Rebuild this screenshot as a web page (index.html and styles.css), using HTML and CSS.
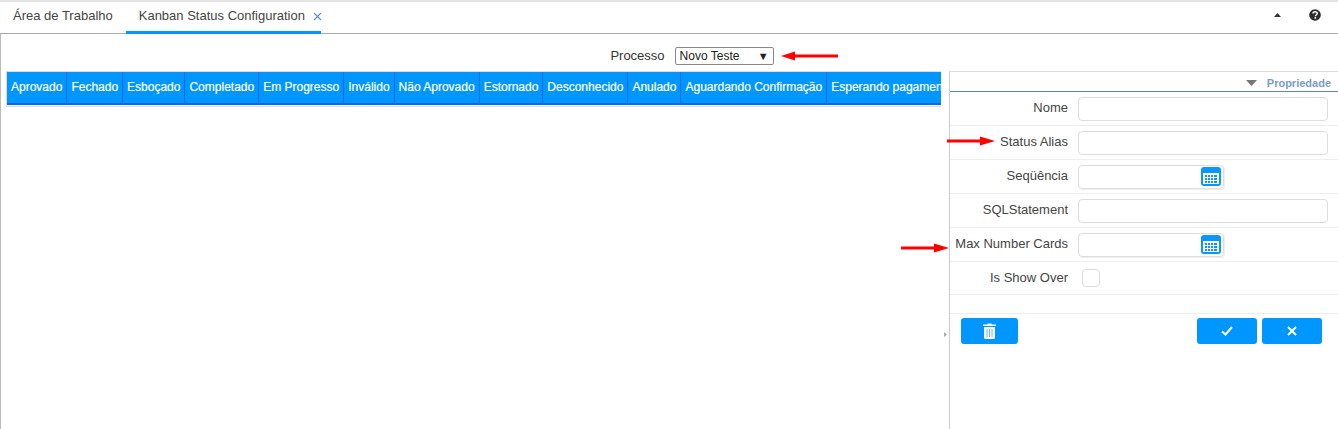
FILE: index.html
```html
<!DOCTYPE html>
<html lang="pt">
<head>
<meta charset="utf-8">
<title>Kanban Status Configuration</title>
<link rel="stylesheet" href="styles.css">
</head>
<body>
<header class="tabs">
  <div class="tab">Área de Trabalho</div>
  <div class="tab tab-active">Kanban Status Configuration<svg class="tab-close" width="9" height="9" viewBox="0 0 9 9"><path d="M1 1l7 7M8 1l-7 7" stroke="#5b8fd9" stroke-width="1.1" fill="none"/></svg>
  </div>
  <div class="tab-tools">
    <svg width="7" height="4" viewBox="0 0 7 4"><path d="M3.500 0L7 4H0z" fill="#333"/></svg>
    <svg class="help" width="12" height="12" viewBox="0 0 12 12"><circle cx="6" cy="6" r="5.800" fill="#2b2b2b"/><path d="M4 4.600c0-2.500 4.200-2.500 4.200-.1 0 1.500-1.800 1.400-1.800 2.700" stroke="#fff" stroke-width="1.500" fill="none"/><rect x="5.500" y="8" width="1.700" height="1.700" fill="#fff"/></svg>
  </div>
</header>
<main class="workspace">
  <div class="process-row">
    <label class="process-label">Processo</label>
    <div class="select"><span>Novo Teste</span><span class="select-caret">▼</span></div>
  </div>
  <div class="content">
    <section class="board">
      <div class="board-head">
        <div class="col">Aprovado</div>
        <div class="col">Fechado</div>
        <div class="col">Esboçado</div>
        <div class="col">Completado</div>
        <div class="col">Em Progresso</div>
        <div class="col">Inválido</div>
        <div class="col">Não Aprovado</div>
        <div class="col">Estornado</div>
        <div class="col">Desconhecido</div>
        <div class="col">Anulado</div>
        <div class="col">Aguardando Confirmação</div>
        <div class="col">Esperando pagamento</div>
      </div>
    </section>
    <div class="splitter"><svg width="3" height="5" viewBox="0 0 3 5"><path d="M0 0l3 2.500L0 5z" fill="#aaa"/></svg></div>
    <aside class="panel">
      <div class="panel-head">
        <svg width="11" height="6" viewBox="0 0 11 6"><path d="M0 0h11L5.500 6z" fill="#777"/></svg>
        <span>Propriedade</span>
      </div>
      <div class="field"><label>Nome</label><div class="input"></div></div>
      <div class="field"><label>Status Alias</label><div class="input"></div></div>
      <div class="field"><label>Seqüência</label><div class="input input-num"><svg class="calc" width="20" height="19" viewBox="0 0 20 19"><use href="#calc"/></svg></div></div>
      <div class="field"><label>SQLStatement</label><div class="input"></div></div>
      <div class="field"><label>Max Number Cards</label><div class="input input-num"><svg class="calc" width="20" height="19" viewBox="0 0 20 19"><use href="#calc"/></svg></div></div>
      <div class="field field-last"><label>Is Show Over</label><div class="check"></div></div>
      <div class="panel-gap"></div>
      <div class="actions">
        <button class="btn btn-del"><svg width="15" height="16" viewBox="0 0 15 16"><path d="M5.500 1.500V.5h4v1h4.500v1.500H1V1.500zM2 4h11v10.500a1.500 1.500 0 0 1-1.500 1.500h-8A1.500 1.500 0 0 1 2 14.500z" fill="#fff"/><path d="M5 6v8M7.500 6v8M10 6v8" stroke="#66bbff" stroke-width="1"/></svg></button>
        <div class="actions-right">
          <button class="btn btn-act"><svg width="12" height="10" viewBox="0 0 12 10"><path d="M1 5.500l3.500 3L11 1" stroke="#fff" stroke-width="2" fill="none"/></svg></button>
          <button class="btn btn-act"><svg width="10" height="10" viewBox="0 0 10 10"><path d="M1 1l8 8M9 1l-8 8" stroke="#fff" stroke-width="2" fill="none"/></svg></button>
        </div>
      </div>
    </aside>
  </div>
  <svg class="arrow arrow-process" width="57" height="10" viewBox="0 0 57 10"><path d="M0 5L14 .5V3.500H57V6.500H14V9.500z" fill="#f00"/></svg>
  <svg class="arrow arrow-alias" width="48" height="10" viewBox="0 0 48 10"><path d="M48 5L33 .5V3.500H0V6.500H33V9.500z" fill="#f00"/></svg>
  <svg class="arrow arrow-max" width="48" height="10" viewBox="0 0 48 10"><path d="M48 5L33 .5V3.500H0V6.500H33V9.500z" fill="#f00"/></svg>
</main>
<svg class="defs" width="0" height="0"><defs><g id="calc"><rect width="20" height="19" rx="3" fill="#0a96ff"/><rect x="2" y="6" width="16" height="11" fill="#fff"/><g fill="#0a96ff"><rect x="4" y="8" width="2" height="2"/><rect x="7" y="8" width="2" height="2"/><rect x="10" y="8" width="2" height="2"/><rect x="13" y="8" width="3" height="2"/><rect x="4" y="11" width="2" height="2"/><rect x="7" y="11" width="2" height="2"/><rect x="10" y="11" width="2" height="2"/><rect x="13" y="11" width="3" height="2"/><rect x="4" y="14" width="2" height="2"/><rect x="7" y="14" width="2" height="2"/><rect x="10" y="14" width="2" height="2"/><rect x="13" y="14" width="3" height="2"/></g></g></defs></svg>
</body>
</html>
```
FILE: styles.css
```css
* { box-sizing: border-box; }
html, body { margin: 0; height: 100%; overflow: hidden; }
body { font-family: "Liberation Sans", Arial, sans-serif; font-size: 12px; color: #333; background: #fff; }
.tabs { height: 34px; display: flex; border-top: 2px solid #e4e4e4; border-bottom: 1px solid #aaa; padding-left: 1px; font-size: 13px; }
.tab { height: 31px; line-height: 27px; padding: 0 12px; margin-right: 1px; color: #444; }
.tab-active { border-bottom: 3px solid #0096ff; height: 32px; padding: 0 0 0 13px; width: 195px; white-space: nowrap; }
.tab-close { margin-left: 8px; vertical-align: -1px; }
.tab-tools { margin-left: auto; display: flex; align-items: center; gap: 28px; padding: 0 17px 5px 0; }
.workspace { position: relative; height: 395px; border-left: 1px solid #bbb; }
.process-row { height: 37px; display: flex; align-items: center; justify-content: center; gap: 10px; padding: 7px 0 0 45px; }
.process-label { font-size: 13px; position: relative; top: -1px; }
.select { width: 99px; height: 18px; border: 1px solid #888; border-radius: 2px; display: flex; justify-content: space-between; align-items: center; padding: 0 4px; color: #222; }
.select-caret { font-size: 11px; line-height: 1; }
.content { display: flex; height: 358px; }
.board { width: 935px; margin-left: 5px; height: 36px; border: 1px solid #ddd; border-right: 0; overflow: hidden; }
.board-head { display: flex; height: 33px; background: #0096ff; border-bottom: 2px solid #0a6be8; white-space: nowrap; }
.col { flex: none; line-height: 30px; padding: 0 4px; border-right: 1px solid #0a6be8; color: #fff; font-weight: 500; -webkit-text-stroke: .2px #fff; }
.splitter { width: 8px; display: flex; align-items: center; justify-content: center; padding-top: 169px; }
.panel { flex: 1; border-left: 1px solid #ccc; border-top: 1px solid #ddd; }
.panel-head { height: 20px; display: flex; justify-content: flex-end; align-items: center; gap: 10px; padding: 2px 7px 0 0; border-bottom: 1px solid #5a8ab0; font-size: 11px; font-weight: bold; color: #7a9cc6; }
.field { height: 34px; display: flex; align-items: center; border-bottom: 1px solid #eee; }
.field label { width: 118px; text-align: right; color: #444; font-size: 13px; white-space: nowrap; padding-bottom: 2px; }
.input { margin-left: 10px; width: 250px; height: 24px; border: 1px solid #ddd; border-radius: 4px; }
.input-num { width: 146px; display: flex; align-items: center; justify-content: flex-end; padding-right: 2px; box-shadow: 1px 1px 1px #eee; }
.calc { display: block; }
.check { margin-left: 14px; width: 18px; height: 18px; border: 1px solid #ddd; border-radius: 4px; }
.field-last { height: 33px; }
.panel-gap { height: 19px; border-bottom: 1px solid #eee; }
.actions { display: flex; justify-content: space-between; padding: 4px 16px 0 11px; }
.actions-right { display: flex; gap: 5px; }
.btn { height: 26px; border: 0; border-radius: 3px; background: #0096ff; display: flex; align-items: center; justify-content: center; padding: 0; }
.btn-del { width: 57px; }
.btn-act { width: 60px; }
.arrow { position: absolute; }
.arrow-process { left: 780px; top: 17px; }
.arrow-alias { left: 946px; top: 102px; }
.arrow-max { left: 900px; top: 209px; }
.defs { position: absolute; }
```
